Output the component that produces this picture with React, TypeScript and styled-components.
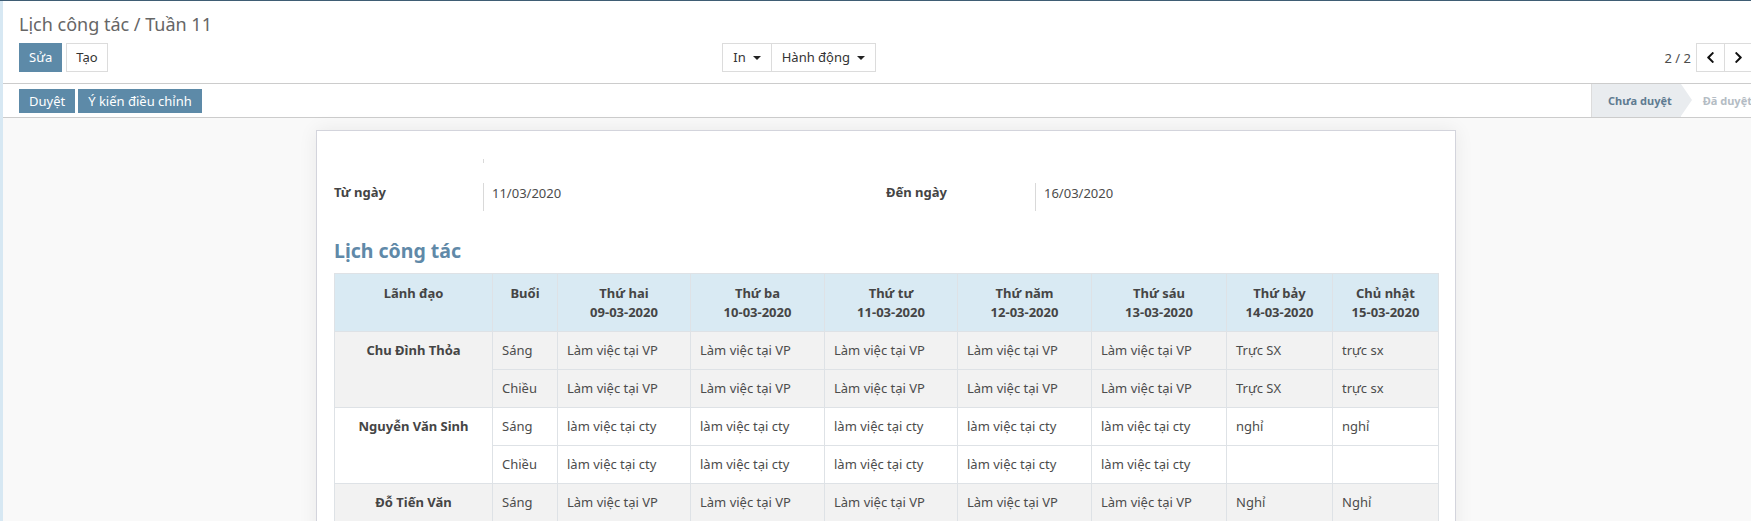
import React from 'react';
import styled, { createGlobalStyle } from 'styled-components';
import { FaChevronLeft, FaChevronRight } from 'react-icons/fa';

const GlobalStyle = createGlobalStyle`
  html, body { margin: 0; padding: 0; height: 100%; overflow: hidden; background: #f9f9f9; }
  body { font-family: "Noto Sans", "Open Sans", sans-serif; font-size: 13px; color: #4c4c4c; }
  * { box-sizing: border-box; }
`;

const Page = styled.div`
  width: 1769px;
  min-height: 521px;
  border-top: 1px solid #3f5d74;
  background: #f9f9f9;
`;

const Main = styled.div`
  border-left: 3px solid #d7e8f3;
  min-height: 520px;
`;

const ControlPanel = styled.div`
  background: #fff;
  padding: 10px 16px 11px;
  border-bottom: 1px solid #cccccc;
`;

const Breadcrumb = styled.div`
  font-size: 18px;
  line-height: 27px;
  color: #666;
`;

const CpRow = styled.div`
  display: grid;
  grid-template-columns: 1fr 1fr;
  margin-top: 5px;
  height: 29px;
`;

const CpLeft = styled.div`
  display: flex;
  justify-content: space-between;
  padding-right: 10px;
`;

const CpRight = styled.div`
  display: flex;
  justify-content: flex-end;
  align-items: center;
`;

const ButtonRow = styled.div<{ $gap: number }>`
  display: flex;
  align-items: center;
  gap: ${p => p.$gap}px;
`;

const Btn = styled.button<{ $primary?: boolean; $small?: boolean }>`
  font-family: inherit;
  font-size: 13px;
  line-height: ${p => (p.$small ? 18 : 19)}px;
  padding: ${p => (p.$small ? '2px 9px' : '4px 9px')};
  border: 1px solid ${p => (p.$primary ? '#5d8aa8' : '#dcdcdc')};
  background: ${p => (p.$primary ? '#5d8aa8' : '#fff')};
  color: ${p => (p.$primary ? '#fff' : '#333')};
  border-radius: 0;
  cursor: pointer;
  white-space: nowrap;
`;

const Group = styled.div`
  display: flex;
  & > * + * { margin-left: -1px; }
`;

const DropBtn = styled(Btn)`
  display: flex;
  align-items: center;
  padding: 4px 10px 4px 10px;
  &::after {
    content: '';
    margin-left: 7px;
    border-top: 4px solid #222;
    border-left: 4px solid transparent;
    border-right: 4px solid transparent;
  }
`;

const PagerValue = styled.span`
  font-size: 13px;
  color: #4c4c4c;
  margin-right: 5px;
`;

const PagerBtn = styled.button`
  width: 29px;
  height: 29px;
  padding: 0;
  border: 1px solid #dcdcdc;
  background: #fff;
  color: #111;
  display: flex;
  align-items: center;
  justify-content: center;
  border-radius: 0;
`;

const StatusBar = styled.div`
  display: flex;
  justify-content: space-between;
  height: 34px;
  border-bottom: 1px solid #cccccc;
  background: #fff;
  padding-left: 16px;
  overflow: hidden;
`;

const Steps = styled.div`
  display: flex;
`;

const Step = styled.div<{ $active?: boolean }>`
  position: relative;
  display: flex;
  align-items: center;
  padding: 0 ${p => (p.$active ? 9 : 17)}px 0 ${p => (p.$active ? 16 : 22)}px;
  font-size: 11px;
  font-weight: 700;
  color: ${p => (p.$active ? '#5f7b91' : '#b4bcc4')};
  background: ${p => (p.$active ? '#e9ecef' : '#fff')};
  border-left: ${p => (p.$active ? '1px solid #dcdcdc' : 'none')};
  white-space: nowrap;
  &::after {
    content: '';
    position: absolute;
    right: -11px;
    top: 0;
    border-top: 16.5px solid transparent;
    border-bottom: 16.5px solid transparent;
    border-left: 11px solid ${p => (p.$active ? '#e9ecef' : '#fff')};
    z-index: 1;
  }
`;

const FormBg = styled.div`
  padding-top: 12px;
`;

const Sheet = styled.div`
  width: 1140px;
  margin: 0 auto;
  background: #fff;
  border: 1px solid #d3d4dc;
  box-shadow: 0 0 18px rgba(0, 0, 0, 0.07);
  padding: 28px 17px 40px;
  min-height: 500px;
`;

const FieldsGrid = styled.div`
  display: grid;
  grid-template-columns: 1fr 1fr;
  row-gap: 20px;
`;

const Field = styled.div`
  display: flex;
`;

const Label = styled.div`
  width: 149px;
  font-weight: 700;
  color: #444;
  line-height: 19px;
`;

const Value = styled.div<{ $h: number }>`
  height: ${p => p.$h}px;
  border-left: 1px solid #d9d9d9;
  padding: 1px 0 0 8px;
  line-height: 19px;
  color: #4c4c4c;
`;

const Heading = styled.h2`
  margin: 29px 0 11px;
  font-size: 19.5px;
  line-height: 22px;
  font-weight: 700;
  color: #6089a8;
`;

const Table = styled.table`
  width: 100%;
  border-collapse: collapse;
  table-layout: fixed;
`;

const Col = styled.col<{ $w: number }>`
  width: ${p => p.$w}px;
`;

const Th = styled.th`
  background: #d9eaf3;
  color: #454545;
  font-weight: 700;
  text-align: center;
  vertical-align: top;
  padding: 10px 9px 9px;
  line-height: 19px;
  border: 1px solid #dee2e6;
`;

const Tr = styled.tr<{ $striped: boolean }>`
  background: ${p => (p.$striped ? '#f2f2f2' : '#fff')};
`;

const Td = styled.td<{ $name?: boolean }>`
  padding: 9px;
  line-height: 19px;
  border: 1px solid #dee2e6;
  vertical-align: top;
  white-space: nowrap;
  overflow: hidden;
  font-weight: ${p => (p.$name ? 700 : 400)};
  text-align: ${p => (p.$name ? 'center' : 'left')};
  color: ${p => (p.$name ? '#454545' : '#4c4c4c')};
`;

const days: [string, string][] = [
  ['Thứ hai', '09-03-2020'],
  ['Thứ ba', '10-03-2020'],
  ['Thứ tư', '11-03-2020'],
  ['Thứ năm', '12-03-2020'],
  ['Thứ sáu', '13-03-2020'],
  ['Thứ bảy', '14-03-2020'],
  ['Chủ nhật', '15-03-2020'],
];

const vp = 'Làm việc tại VP';
const cty = 'làm việc tại cty';

const people: { name: string; sang: string[]; chieu: string[] }[] = [
  {
    name: 'Chu Đình Thỏa',
    sang: [vp, vp, vp, vp, vp, 'Trực SX', 'trực sx'],
    chieu: [vp, vp, vp, vp, vp, 'Trực SX', 'trực sx'],
  },
  {
    name: 'Nguyễn Văn Sinh',
    sang: [cty, cty, cty, cty, cty, 'nghỉ', 'nghỉ'],
    chieu: [cty, cty, cty, cty, cty, '', ''],
  },
  {
    name: 'Đỗ Tiến Văn',
    sang: [vp, vp, vp, vp, vp, 'Nghỉ', 'Nghỉ'],
    chieu: [vp, vp, vp, vp, vp, 'Nghỉ', 'Nghỉ'],
  },
];

const colWidths = [158, 65, 133, 134, 133, 134, 135, 106, 106];

export default function App() {
  return (
    <>
      <GlobalStyle />
      <Page>
        <Main>
          <ControlPanel>
            <Breadcrumb>Lịch công tác / Tuần 11</Breadcrumb>
            <CpRow>
              <CpLeft>
                <ButtonRow $gap={4}>
                  <Btn $primary>Sửa</Btn>
                  <Btn>Tạo</Btn>
                </ButtonRow>
                <Group>
                  <DropBtn>In</DropBtn>
                  <DropBtn>Hành động</DropBtn>
                </Group>
              </CpLeft>
              <CpRight>
                <PagerValue>2 / 2</PagerValue>
                <Group>
                  <PagerBtn aria-label="Trước">
                    <FaChevronLeft size={13} />
                  </PagerBtn>
                  <PagerBtn aria-label="Sau">
                    <FaChevronRight size={13} />
                  </PagerBtn>
                </Group>
              </CpRight>
            </CpRow>
          </ControlPanel>
          <StatusBar>
            <ButtonRow $gap={3}>
              <Btn $primary $small>Duyệt</Btn>
              <Btn $primary $small>Ý kiến điều chỉnh</Btn>
            </ButtonRow>
            <Steps>
              <Step $active>Chưa duyệt</Step>
              <Step>Đã duyệt</Step>
            </Steps>
          </StatusBar>
          <FormBg>
            <Sheet>
              <FieldsGrid>
                <Field>
                  <Label />
                  <Value $h={4} />
                </Field>
                <div />
                <Field>
                  <Label>Từ ngày</Label>
                  <Value $h={28}>11/03/2020</Value>
                </Field>
                <Field>
                  <Label>Đến ngày</Label>
                  <Value $h={28}>16/03/2020</Value>
                </Field>
              </FieldsGrid>
              <Heading>Lịch công tác</Heading>
              <Table>
                <colgroup>
                  {colWidths.map((w, i) => (
                    <Col key={i} $w={w} />
                  ))}
                </colgroup>
                <thead>
                  <tr>
                    <Th>Lãnh đạo</Th>
                    <Th>Buổi</Th>
                    {days.map(([d, date]) => (
                      <Th key={d}>
                        {d}
                        <br />
                        {date}
                      </Th>
                    ))}
                  </tr>
                </thead>
                <tbody>
                  {people.map((p, i) => (
                    <React.Fragment key={p.name}>
                      <Tr $striped={i % 2 === 0}>
                        <Td $name rowSpan={2}>{p.name}</Td>
                        <Td>Sáng</Td>
                        {p.sang.map((v, j) => (
                          <Td key={j}>{v}</Td>
                        ))}
                      </Tr>
                      <Tr $striped={i % 2 === 0}>
                        <Td>Chiều</Td>
                        {p.chieu.map((v, j) => (
                          <Td key={j}>{v}</Td>
                        ))}
                      </Tr>
                    </React.Fragment>
                  ))}
                </tbody>
              </Table>
            </Sheet>
          </FormBg>
        </Main>
      </Page>
    </>
  );
}
